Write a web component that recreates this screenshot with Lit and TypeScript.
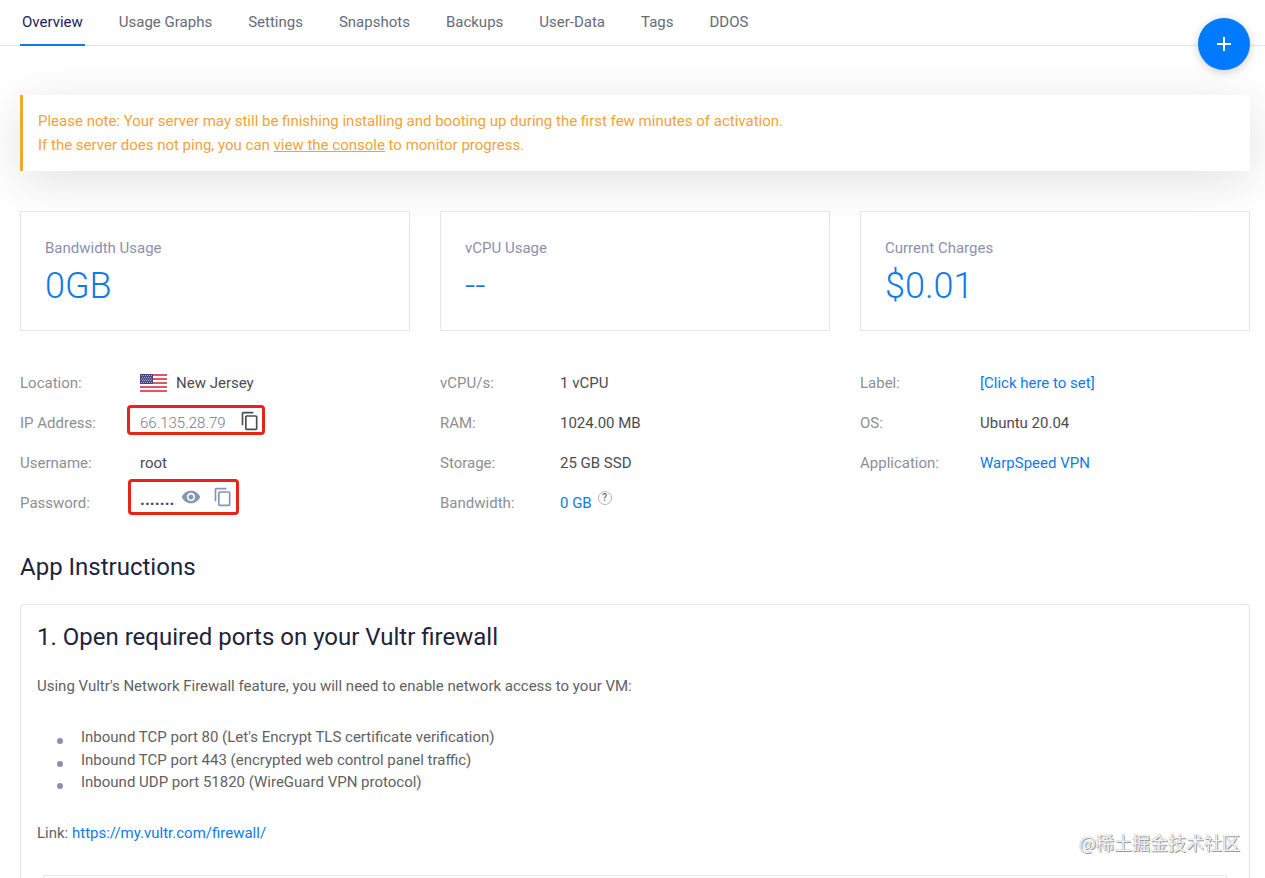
import { LitElement, html, css, svg } from "lit";
import { customElement } from "lit/decorators.js";
import { classMap } from "lit/directives/class-map.js";

const TABS = ["Overview", "Usage Graphs", "Settings", "Snapshots", "Backups", "User-Data", "Tags", "DDOS"];

const STATS = [
  { label: "Bandwidth Usage", value: "0GB" },
  { label: "vCPU Usage", value: "--" },
  { label: "Current Charges", value: "$0.01" },
];

const PORTS = [
  "Inbound TCP port 80 (Let's Encrypt TLS certificate verification)",
  "Inbound TCP port 443 (encrypted web control panel traffic)",
  "Inbound UDP port 51820 (WireGuard VPN protocol)",
];

const copyIcon = html`<svg class="icon" viewBox="0 0 24 24" aria-hidden="true">
  <path fill="currentColor" d="M16 1H4c-1.100 0-2 .9-2 2v14h2V3h12V1zm3 4H8c-1.100 0-2 .9-2 2v14c0 1.100.9 2 2 2h11c1.100 0 2-.9 2-2V7c0-1.100-.9-2-2-2zm0 16H8V7h11v14z" />
</svg>`;

const eyeIcon = html`<svg class="icon" viewBox="0 0 24 24" aria-hidden="true">
  <path fill="currentColor" d="M12 4.500C7 4.500 2.730 7.610 1 12c1.730 4.390 6 7.500 11 7.500s9.270-3.110 11-7.500c-1.730-4.390-6-7.500-11-7.500zM12 17c-2.760 0-5-2.240-5-5s2.240-5 5-5 5 2.240 5 5-2.240 5-5 5zm0-8c-1.660 0-3 1.340-3 3s1.340 3 3 3 3-1.340 3-3-1.340-3-3-3z" />
</svg>`;

const stripes = [0, 1, 2, 3, 4].map((i) => svg`<rect x="0" y=${i * 4} width="27" height="2" fill="#dd5864" />`);
const stars = [0, 1, 2, 3, 4].flatMap((row) =>
  (row % 2 ? [2.5, 4.5, 6.5, 8.5, 10.5] : [1.5, 3.5, 5.5, 7.5, 9.5, 11.5]).map(
    (x) => svg`<circle cx=${x} cy=${1.5 + row * 1.7} r="0.5" fill="#d9d8ea" />`
  )
);

const flag = html`<svg class="flag" viewBox="0 0 27 18" role="img" aria-label="United States">
  <rect width="27" height="18" fill="#fff" />
  ${stripes}
  <rect width="13" height="10" fill="#46447b" />
  ${stars}
</svg>`;

@customElement("app-root")
export class AppRoot extends LitElement {
  static styles = css`
    :host {
      display: block;
      font-family: Roboto, "Liberation Sans", sans-serif;
      font-size: 15px;
      line-height: 24px;
      color: #55575b;
    }
    .page {
      position: relative;
      display: flex;
      flex-direction: column;
      height: 100vh;
      overflow: hidden;
      background: #fff;
    }
    a {
      color: #107ae6;
      text-decoration: none;
    }
    button {
      padding: 0;
      border: 0;
      background: none;
      font: inherit;
      cursor: pointer;
    }
    .tabs {
      display: flex;
      flex: none;
      gap: 32px;
      height: 45px;
      padding: 0 20px;
      border-bottom: 1px solid #e3e4e6;
    }
    .tab {
      height: 44px;
      padding: 0 2px;
      line-height: 44px;
      color: #666b7a;
      border-bottom: 2px solid transparent;
    }
    .tab.active {
      color: #1c2260;
      border-color: #107ae6;
    }
    .add {
      position: absolute;
      top: 18px;
      right: 15px;
      width: 52px;
      height: 52px;
      border-radius: 50%;
      background: #007bff;
      box-shadow: 0 2px 10px rgba(0, 0, 0, 0.2);
      display: grid;
      place-items: center;
    }
    .add svg {
      width: 16px;
      height: 16px;
    }
    .main {
      display: flex;
      flex-direction: column;
      flex: 1;
      min-height: 0;
      padding: 49px 15px 0 20px;
    }
    .notice {
      flex: none;
      padding: 14px 15px;
      border-left: 3px solid #f0a830;
      background: #fff;
      color: #f0a33c;
      box-shadow: 0 10px 50px rgba(0, 0, 0, 0.12);
    }
    .notice p {
      margin: 0;
    }
    .notice a {
      color: inherit;
      text-decoration: underline;
    }
    .columns {
      display: grid;
      grid-template-columns: repeat(3, 1fr);
      gap: 30px;
      flex: none;
    }
    .stats {
      margin-top: 40px;
    }
    .stat {
      position: relative;
      height: 120px;
      box-sizing: border-box;
      padding: 24px;
      border: 1px solid #e4e5e7;
      background: #fff;
    }
    .stat-label {
      color: #8d90ad;
    }
    .stat-value {
      margin-top: 4px;
      font-size: 36px;
      line-height: 44px;
      font-weight: 300;
      color: #107ae6;
    }
    .details {
      margin-top: 32px;
    }
    dl {
      margin: 0;
    }
    .row {
      display: flex;
      align-items: center;
      height: 40px;
    }
    dt {
      width: 120px;
      color: #8c8f94;
    }
    dd {
      margin: 0;
      display: flex;
      align-items: center;
      color: #4a4c50;
    }
    .flag {
      width: 27px;
      height: 18px;
      margin-right: 9px;
    }
    .icon {
      display: block;
      width: 20px;
      height: 20px;
    }
    .marked {
      position: relative;
    }
    .marked::after {
      content: "";
      position: absolute;
      inset: -6px -5px 0 -13px;
      border: 3px solid #e8231b;
      border-radius: 4px;
      pointer-events: none;
    }
    .ip {
      font-weight: 300;
      color: #777b86;
    }
    .copy {
      margin-left: 14px;
      color: #4c4e52;
      margin-bottom: 4px;
    }
    .muted {
      color: #8496b4;
      margin-bottom: 12px;
    }
    .secret::after {
      inset: -8px -6px 4px -12px;
    }
    .secret .copy {
      margin-left: 12px;
    }
    .dots {
      width: 36px;
      margin-bottom: 8px;
      font-size: 17px;
      font-weight: 700;
    }
    .eye {
      margin-left: 5px;
    }
    .help {
      width: 14px;
      height: 14px;
      margin: 0 0 10px 6px;
      box-sizing: border-box;
      border: 1px solid #b4b6ba;
      border-radius: 50%;
      font-size: 10px;
      line-height: 12px;
      font-weight: 500;
      text-align: center;
      color: #66686c;
    }
    h2,
    h3 {
      margin: 0;
      font-size: 24px;
      line-height: 32px;
      font-weight: 400;
      color: #20243a;
    }
    .heading {
      flex: none;
      margin-top: 28px;
    }
    .panel {
      flex: 1;
      min-height: 0;
      margin-top: 21px;
      padding: 16px 16px 0;
      border: 1px solid #e4e5e7;
      border-bottom: 0;
      border-radius: 4px 4px 0 0;
      color: #5f6165;
    }
    .panel p {
      margin: 21px 0 0;
    }
    .ports {
      margin: 28px 0 0;
      padding: 0;
      list-style: none;
      line-height: 1.5;
    }
    .ports li {
      display: flex;
      align-items: center;
      padding-left: 20px;
    }
    .ports li::before {
      content: "";
      width: 6px;
      height: 6px;
      margin: 8px 18px 0 0;
      border-radius: 50%;
      background: #8e8db2;
    }
    .panel .link {
      margin-top: 27px;
    }
    .code {
      height: 120px;
      margin: 30px 6px 0;
      border: 1px solid #e4e5e7;
      border-radius: 2px;
    }
    .watermark {
      position: absolute;
      right: 25px;
      bottom: 24px;
      font-family: "Noto Sans CJK SC", sans-serif;
      font-size: 18px;
      line-height: 24px;
      color: #f4f4f4;
      text-shadow: 1px 1px 0 #999, 0 0 1px #888;
    }
  `;

  render() {
    return html`
      <div class="page">
        <nav class="tabs">
          ${TABS.map((t, i) => html`<a href="#" class=${classMap({ tab: true, active: i === 0 })}>${t}</a>`)}
        </nav>
        <main class="main">
          <div class="notice">
            <p>Please note: Your server may still be finishing installing and booting up during the first few minutes of activation.</p>
            <p>If the server does not ping, you can <a href="#">view the console</a> to monitor progress.</p>
          </div>
          <section class="columns stats">
            ${STATS.map(
              (s) => html`<div class="stat">
                <div class="stat-label">${s.label}</div>
                <div class="stat-value">${s.value}</div>
              </div>`
            )}
          </section>
          <section class="columns details">
            <dl>
              <div class="row"><dt>Location:</dt><dd>${flag}New Jersey</dd></div>
              <div class="row">
                <dt>IP Address:</dt>
                <dd class="marked"><span class="ip">66.135.28.79</span><button class="copy" aria-label="Copy IP address">${copyIcon}</button></dd>
              </div>
              <div class="row"><dt>Username:</dt><dd>root</dd></div>
              <div class="row">
                <dt>Password:</dt>
                <dd class="marked secret">
                  <span class="dots">.......</span><button class="muted eye" aria-label="Show password">${eyeIcon}</button><button class="copy muted" aria-label="Copy password">${copyIcon}</button>
                </dd>
              </div>
            </dl>
            <dl>
              <div class="row"><dt>vCPU/s:</dt><dd>1 vCPU</dd></div>
              <div class="row"><dt>RAM:</dt><dd>1024.00 MB</dd></div>
              <div class="row"><dt>Storage:</dt><dd>25 GB SSD</dd></div>
              <div class="row"><dt>Bandwidth:</dt><dd><a href="#">0 GB</a><button class="help">?</button></dd></div>
            </dl>
            <dl>
              <div class="row"><dt>Label:</dt><dd><a href="#">[Click here to set]</a></dd></div>
              <div class="row"><dt>OS:</dt><dd>Ubuntu 20.04</dd></div>
              <div class="row"><dt>Application:</dt><dd><a href="#">WarpSpeed VPN</a></dd></div>
            </dl>
          </section>
          <h2 class="heading">App Instructions</h2>
          <section class="panel">
            <h3>1. Open required ports on your Vultr firewall</h3>
            <p>Using Vultr's Network Firewall feature, you will need to enable network access to your VM:</p>
            <ul class="ports">
              ${PORTS.map((p) => html`<li>${p}</li>`)}
            </ul>
            <p class="link">Link: <a href="https://my.vultr.com/firewall/">https://my.vultr.com/firewall/</a></p>
            <div class="code"></div>
          </section>
        </main>
        <button class="add" aria-label="Add server">
          <svg viewBox="0 0 16 16" aria-hidden="true"><path d="M8 1v14M1 8h14" stroke="#fff" stroke-width="2" /></svg>
        </button>
        <div class="watermark">@稀土掘金技术社区</div>
      </div>
    `;
  }
}
